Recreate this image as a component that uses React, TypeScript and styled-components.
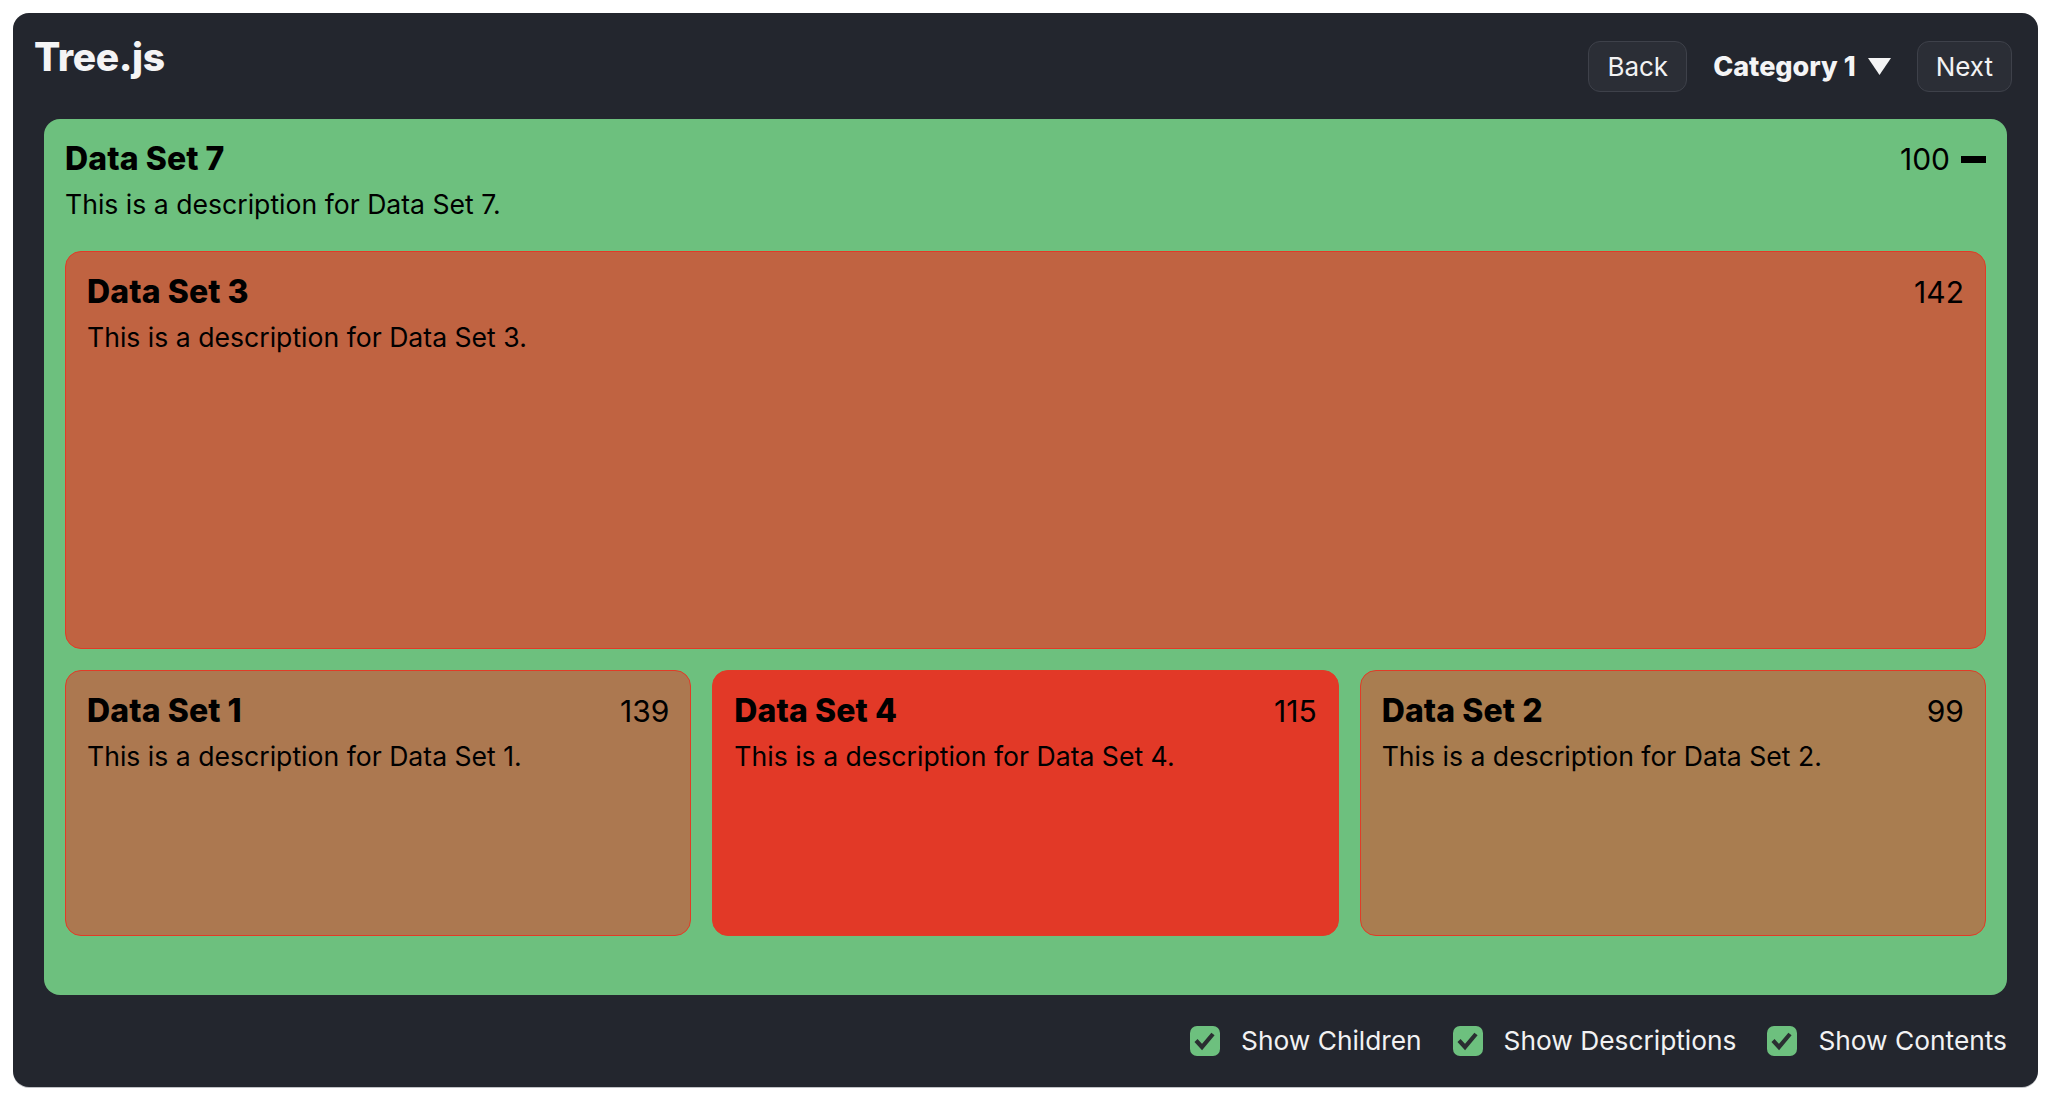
import React from "react";
import styled, { createGlobalStyle } from "styled-components";

const GlobalStyle = createGlobalStyle`
  html, body {
    margin: 0;
    padding: 0;
    background: #ffffff;
    font-family: Inter, "Noto Sans", "Liberation Sans", sans-serif;
  }
  * { box-sizing: border-box; }
`;

const Page = styled.div`
  padding: 13px 15px 16px 13px;
`;

const Panel = styled.div`
  background: #23262e;
  border-radius: 16px;
  height: 1074px;
  display: flex;
  flex-direction: column;
  box-shadow: 0 1px 0 rgba(140, 144, 152, 0.55);
`;

const Header = styled.header`
  height: 106px;
  flex: 0 0 106px;
  display: flex;
  align-items: center;
  justify-content: space-between;
  padding: 0 26px 0 21px;
`;

const Brand = styled.h1`
  margin: 0 0 19px;
  font-size: 39px;
  font-weight: 800;
  line-height: 48px;
  color: #f4f4f5;
  letter-spacing: -0.4px;
`;

const Nav = styled.nav`
  display: flex;
  align-items: center;
  gap: 26px;
`;

const NavButton = styled.button`
  height: 51px;
  padding: 0 18px;
  background: #2b2e36;
  border: 1px solid #3e414a;
  border-radius: 12px;
  color: #f2f2f3;
  font-family: inherit;
  font-size: 26px;
  font-weight: 400;
  cursor: pointer;
`;

const CategoryLabel = styled.div`
  display: flex;
  align-items: center;
  gap: 12px;
  color: #f4f4f5;
  font-size: 27px;
  font-weight: 800;
`;

const Node = styled.section<{ $bg: string; $bordered: boolean; $grow?: boolean }>`
  background: ${(p) => p.$bg};
  border: ${(p) => (p.$bordered ? "1px solid #e13b27" : "none")};
  border-radius: 16px;
  padding: 21px;
  color: #000;
  display: flex;
  flex-direction: column;
  min-width: 0;
  ${(p) => (p.$grow ? "flex: 1 1 0;" : "")}
`;

const RootNode = styled(Node)`
  margin: 0 31px;
  flex: 0 0 876px;
`;

const NodeHead = styled.div`
  display: flex;
  align-items: baseline;
  justify-content: space-between;
`;

const NodeTitle = styled.h2`
  margin: 0;
  font-size: 32px;
  font-weight: 800;
  line-height: 38px;
  letter-spacing: 0.1px;
`;

const NodeValue = styled.div`
  display: flex;
  align-items: center;
  gap: 11px;
  font-size: 30px;
  line-height: 38px;
  font-weight: 400;
`;

const NodeDesc = styled.p`
  margin: 10px 0 0;
  font-size: 26.6px;
  line-height: 32px;
  font-weight: 400;
`;

const Children = styled.div`
  margin-top: 31px;
  height: 723px;
  display: flex;
  flex-direction: column;
  gap: 21px;
`;

const Row = styled.div<{ $h: number }>`
  display: flex;
  gap: 21px;
  flex: 0 0 ${(p) => p.$h}px;
  height: ${(p) => p.$h}px;
`;

const Footer = styled.footer`
  flex: 1 1 auto;
  display: flex;
  align-items: center;
  justify-content: flex-end;
  gap: 31px;
  padding: 0 31px;
`;

const CheckItem = styled.label`
  display: flex;
  align-items: center;
  gap: 21px;
  color: #f2f2f3;
  font-size: 26.3px;
  line-height: 32px;
`;

const CheckBox = styled.span`
  width: 30px;
  height: 30px;
  border-radius: 7px;
  background: #6dc07e;
  display: flex;
  align-items: center;
  justify-content: center;
`;

const Caret = () => (
  <svg width="23" height="17" viewBox="0 0 23 17">
    <polygon points="0,0 23,0 11.5,17" fill="#f4f4f5" />
  </svg>
);

const Minus = () => (
  <svg width="25" height="7" viewBox="0 0 25 7">
    <rect x="0" y="0" width="25" height="7" fill="#000" />
  </svg>
);

const Check = () => (
  <svg width="30" height="30" viewBox="0 0 30 30">
    <polyline
      points="6,14.5 12,21 23,8"
      fill="none"
      stroke="#2a2e31"
      strokeWidth="4.2"
      strokeLinecap="butt"
      strokeLinejoin="miter"
    />
  </svg>
);

type Item = { name: string; value: number; bg: string };

const topChild: Item = { name: "Data Set 3", value: 142, bg: "#c06341" };
const rowChildren: Item[] = [
  { name: "Data Set 1", value: 139, bg: "#ac7850" },
  { name: "Data Set 4", value: 115, bg: "#e23927" },
  { name: "Data Set 2", value: 99, bg: "#a97d50" },
];

const Card = ({ item }: { item: Item }) => (
  <Node $bg={item.bg} $bordered $grow>
    <NodeHead>
      <NodeTitle>{item.name}</NodeTitle>
      <NodeValue>{item.value}</NodeValue>
    </NodeHead>
    <NodeDesc>This is a description for {item.name}.</NodeDesc>
  </Node>
);

export default function App() {
  return (
    <>
      <GlobalStyle />
      <Page>
        <Panel>
          <Header>
            <Brand>Tree.js</Brand>
            <Nav>
              <NavButton>Back</NavButton>
              <CategoryLabel>
                Category 1 <Caret />
              </CategoryLabel>
              <NavButton>Next</NavButton>
            </Nav>
          </Header>
          <RootNode $bg="#6dc07e" $bordered={false}>
            <NodeHead>
              <NodeTitle>Data Set 7</NodeTitle>
              <NodeValue>
                100 <Minus />
              </NodeValue>
            </NodeHead>
            <NodeDesc>This is a description for Data Set 7.</NodeDesc>
            <Children>
              <Row $h={398}>
                <Card item={topChild} />
              </Row>
              <Row $h={266}>
                {rowChildren.map((c) => (
                  <Card key={c.name} item={c} />
                ))}
              </Row>
            </Children>
          </RootNode>
          <Footer>
            {["Show Children", "Show Descriptions", "Show Contents"].map((t) => (
              <CheckItem key={t}>
                <CheckBox>
                  <Check />
                </CheckBox>
                {t}
              </CheckItem>
            ))}
          </Footer>
        </Panel>
      </Page>
    </>
  );
}
